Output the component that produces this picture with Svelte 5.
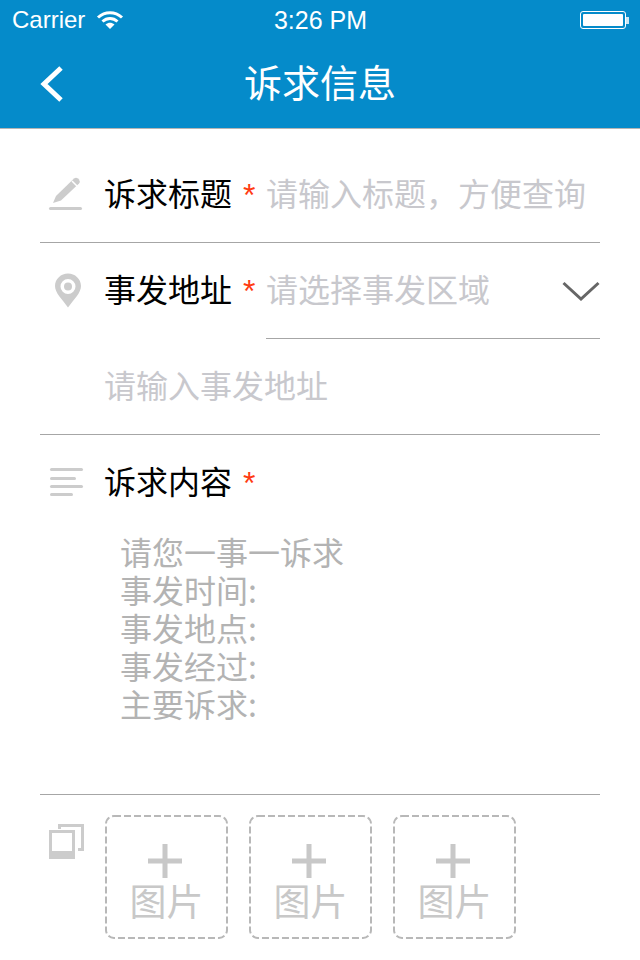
<script>
    const slots = [1, 2, 3];
    const hint = '请您一事一诉求\n事发时间:\n事发地点:\n事发经过:\n主要诉求:';
</script>

<div class="page">
    <header class="top">
        <div class="status">
            <div class="left">
                <span class="carrier">Carrier</span>
                <svg class="wifi" width="28" height="20" viewBox="0 0 28 20">
                    <path d="M2 7.500C9 1 19 1 26 7.500" fill="none" stroke="#fff" stroke-width="3"/>
                    <path d="M6.500 11.500C11 7.500 17 7.500 21.500 11.500" fill="none" stroke="#fff" stroke-width="3"/>
                    <path d="M9.500 14.500C12.500 12 15.500 12 18.500 14.500L14 19Z" fill="#fff"/>
                </svg>
            </div>
            <span class="time">3:26 PM</span>
            <div class="right">
                <span class="battery"><i></i></span>
                <span class="nub"></span>
            </div>
        </div>
        <div class="nav">
            <svg class="back" width="26" height="38" viewBox="0 0 26 38">
                <path d="M22 3L5 19L22 35" fill="none" stroke="#fff" stroke-width="5"/>
            </svg>
            <h1>诉求信息</h1>
        </div>
    </header>

    <form>
        <div class="row line">
            <svg class="icon" width="36" height="36" viewBox="0 0 36 36">
                <path d="M5 26L8 19L26 1.500Q28 0 30 1.500L31 2.500Q32.500 4.500 31 6.500L13 23.500Z" fill="#ccc"/>
                <path d="M24 4L29 9" stroke="#fff" stroke-width="1.500"/>
                <rect x="1" y="30" width="33" height="3" rx="1.500" fill="#ccc"/>
            </svg>
            <label for="title">诉求标题</label>
            <span class="req">*</span>
            <input id="title" placeholder="请输入标题，方便查询">
        </div>

        <div class="row">
            <svg class="icon" width="36" height="36" viewBox="0 0 36 36">
                <path fill-rule="evenodd" fill="#ccc" d="M20 0.500C27 0.500 33 6 33 13C33 20 26 26 20 34.500C14 26 7 20 7 13C7 6 13 0.500 20 0.500ZM20 6A7.500 7.500 0 1 0 20 21A7.500 7.500 0 1 0 20 6Z"/>
                <circle cx="20" cy="13.500" r="4" fill="#ccc"/>
            </svg>
            <label for="area">事发地址</label>
            <span class="req">*</span>
            <div class="picker">
                <input id="area" placeholder="请选择事发区域">
                <svg width="38" height="20" viewBox="0 0 38 20">
                    <path d="M1.500 2L19 18L36.500 2" fill="none" stroke="#666" stroke-width="3"/>
                </svg>
            </div>
        </div>

        <div class="row line street">
            <input placeholder="请输入事发地址">
        </div>

        <div class="content line">
            <div class="row-head">
                <svg class="icon" width="36" height="30" viewBox="0 0 36 30">
                    <rect x="2" y="0" width="33" height="3" rx="1.500" fill="#ccc"/>
                    <rect x="2" y="9" width="26" height="3" rx="1.500" fill="#ccc"/>
                    <rect x="2" y="17" width="33" height="3" rx="1.500" fill="#ccc"/>
                    <rect x="2" y="25" width="23" height="3" rx="1.500" fill="#ccc"/>
                </svg>
                <label for="content">诉求内容</label>
                <span class="req">*</span>
            </div>
            <textarea id="content" placeholder={hint}></textarea>
        </div>

        <div class="photos">
            <svg class="icon pics" width="36" height="36" viewBox="0 0 36 36">
                <path d="M10 1H36V28H30V25H33V4H13V6H10Z" fill="#ccc"/>
                <path fill-rule="evenodd" d="M1 7H27V36H1ZM4 10V28H24V10Z" fill="#ccc"/>
            </svg>
            {#each slots as slot (slot)}
                <button type="button" class="add">
                    <svg width="36" height="36" viewBox="0 0 36 36">
                        <path d="M15.500 1H20.500V15.500H35V20.500H20.500V35H15.500V20.500H1V15.500H15.500Z" fill="#c8c8c8"/>
                    </svg>
                    <span>图片</span>
                </button>
            {/each}
        </div>
    </form>
</div>

<style>
    :global(body) {
        margin: 0;
        background: #fff;
    }

    .page {
        width: 640px;
        height: 960px;
        overflow: hidden;
        font-family: "Noto Sans CJK SC", "Liberation Sans", sans-serif;
    }

    .top {
        height: 128px;
        background: #058bca;
        border-bottom: 1px solid #b5b5b5;
        color: #fff;
    }

    .status {
        display: grid;
        grid-template-columns: 1fr auto 1fr;
        align-items: center;
        height: 40px;
        padding: 0 11px 0 12px;
        font-family: "Liberation Sans", sans-serif;
        font-size: 24px;
    }

    .left,
    .right {
        display: flex;
        align-items: center;
    }

    .right {
        justify-content: flex-end;
    }

    .carrier {
        width: 84px;
    }

    .time {
        font-size: 25px;
    }

    .battery {
        box-sizing: border-box;
        width: 46px;
        height: 18px;
        padding: 2px;
        border: 1px solid #fff;
        border-radius: 3px;
        display: flex;
    }

    .battery i {
        flex: 1;
        background: #fff;
        border-radius: 1px;
    }

    .nub {
        width: 3px;
        height: 7px;
        background: #fff;
        opacity: 0.8;
    }

    .nav {
        display: flex;
        align-items: center;
        height: 88px;
        padding-left: 39px;
    }

    .back {
        flex: none;
    }

    h1 {
        margin: 0 0 6px 179px;
        font-size: 38px;
        font-weight: 400;
        line-height: 82px;
    }

    form {
        display: block;
        margin: 18px 40px 0;
    }

    .row {
        display: flex;
        align-items: center;
        box-sizing: border-box;
        height: 96px;
    }

    .line {
        border-bottom: 1px solid #a6a6a6;
    }

    .icon {
        flex: none;
        width: 36px;
        margin: 0 20px 0 8px;
    }

    label {
        flex: none;
        margin-bottom: 6px;
        font-size: 32px;
        line-height: 40px;
        color: #000;
    }

    .req {
        flex: none;
        margin: 0 9px 0 11px;
        width: 14px;
        font-size: 32px;
        line-height: 40px;
        color: #ff3b12;
        font-family: "Liberation Sans", sans-serif;
    }

    input,
    textarea {
        border: 0;
        outline: 0;
        padding: 0;
        margin: 0;
        background: transparent;
        font-family: inherit;
        font-size: 32px;
    }

    input {
        flex: 1;
        min-width: 0;
        height: 40px;
        margin-bottom: 6px;
    }

    input::placeholder {
        color: #c8c8cd;
        opacity: 1;
    }

    .picker {
        flex: 1;
        min-width: 0;
        display: flex;
        align-items: center;
        align-self: stretch;
        border-bottom: 1px solid #a6a6a6;
    }

    .picker svg {
        flex: none;
    }

    .street {
        padding-left: 64px;
    }

    .content {
        box-sizing: border-box;
        height: 360px;
    }

    .row-head {
        display: flex;
        align-items: center;
        height: 96px;
    }

    textarea {
        display: block;
        box-sizing: border-box;
        width: 100%;
        height: 220px;
        padding: 1px 0 0 80px;
        resize: none;
        line-height: 38px;
    }

    textarea::placeholder {
        color: #b3b3b3;
        opacity: 1;
    }

    .photos {
        display: flex;
        align-items: flex-start;
        gap: 21px;
        padding-top: 20px;
    }

    .pics {
        margin: 8px 0 0 8px;
    }

    .add {
        box-sizing: border-box;
        display: flex;
        flex-direction: column;
        align-items: center;
        width: 123px;
        height: 124px;
        padding: 28px 0 0;
        background: url("data:image/svg+xml,%3Csvg xmlns='http://www.w3.org/2000/svg' width='123' height='124'%3E%3Crect x='1' y='1' width='121' height='122' rx='8' fill='none' stroke='%23b8b8b8' stroke-width='2' stroke-dasharray='7 3'/%3E%3C/svg%3E") no-repeat;
        border: 0;
        color: #c8c8c8;
        font-family: inherit;
    }

    .add svg {
        margin-right: 3px;
    }

    .add span {
        font-size: 37px;
        line-height: 42px;
        margin-top: 0;
    }
</style>
